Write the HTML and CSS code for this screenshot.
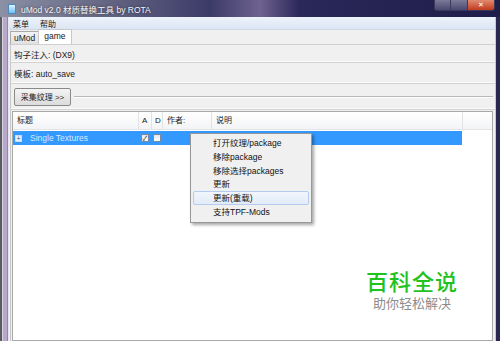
FILE: index.html
```html
<!DOCTYPE html>
<html lang="zh-CN">

<head>
    <meta charset="UTF-8">
    <title>uMod v2.0 材质替换工具 by ROTA</title>
    <link rel="stylesheet" href="styles.css">
</head>

<body>
    <div class="window">
        <div class="titlebar">
            <span class="app-icon"></span>
            <span class="title">uMod v2.0 材质替换工具 by ROTA</span>
            <div class="controls">
                <span class="ctl min"></span>
                <span class="ctl max"></span>
                <span class="ctl close">✕</span>
            </div>
        </div>
        <div class="frame">
            <div class="edge-left"></div>
            <div class="main">
                <div class="menubar">
                    <span class="menu-item">菜单</span>
                    <span class="menu-item">帮助</span>
                </div>
                <div class="tabs">
                    <span class="tab">uMod</span>
                    <span class="tab active">game</span>
                </div>
                <div class="panel">
                    <div class="row">钩子注入: (DX9)</div>
                    <div class="row">模板: auto_save</div>
                    <div class="row row-button">
                        <button class="btn">采集纹理 &gt;&gt;</button>
                        <span class="rule"></span>
                    </div>
                    <div class="list">
                        <div class="list-head">
                            <span class="col c-title">标题</span>
                            <span class="col c-a">A</span>
                            <span class="col c-d">D</span>
                            <span class="col c-author">作者:</span>
                            <span class="col c-desc">说明</span>
                            <span class="col c-rest"></span>
                        </div>
                        <div class="list-row selected">
                            <span class="col c-title"><span class="expander">+</span>Single Textures</span>
                            <span class="col c-a"><span class="check on">✓</span></span>
                            <span class="col c-d"><span class="check"></span></span>
                            <span class="col c-author"></span>
                            <span class="col c-desc"></span>
                        </div>

                        <!-- context menu opened on the row -->
                        <ul class="context-menu">
                            <li>打开纹理/package</li>
                            <li>移除package</li>
                            <li>移除选择packages</li>
                            <li>更新</li>
                            <li class="hover">更新(重载)</li>
                            <li>支持TPF-Mods</li>
                        </ul>
                    </div>
                </div>
            </div>
            <div class="edge-right"></div>
        </div>

        <div class="watermark">
            <div class="wm-big">百科全说</div>
            <div class="wm-small">助你轻松解决</div>
        </div>
    </div>
</body>

</html>
```

FILE: styles.css
```css
* {
    box-sizing: border-box;
}

body {
    margin: 0;
    font-family: "Liberation Sans", "Noto Sans CJK SC", sans-serif;
    font-size: 8px;
    color: #1a1a1a;
}

.window {
    position: relative;
    width: 500px;
    height: 341px;
    overflow: hidden;
    background: #24224c;
}

/* title bar */
.titlebar {
    display: flex;
    align-items: center;
    height: 17px;
    padding-left: 8px;
    background: linear-gradient(90deg, #8b90a4 0%, #6b6d88 18%, #3c3a68 42%, #6e6290 52%, #2a2858 60%, #1f1d4a 100%);
}

.app-icon {
    width: 8px;
    height: 10px;
    margin-right: 5px;
    background: linear-gradient(#dff2ff, #6fc0f0);
    border: 1px solid #4a8ac0;
}

.title {
    color: #f4f4f8;
    font-size: 8.5px;
    text-shadow: 0 0 3px rgba(0, 0, 0, 0.6);
}

.controls {
    display: flex;
    align-self: flex-start;
    margin-left: auto;
    margin-right: 5px;
}

.ctl {
    height: 11px;
    border: 1px solid #3b3a58;
    border-top: 0;
    background: linear-gradient(#7c7a98, #4a4870);
}

.min {
    width: 17px;
    border-radius: 0 0 0 3px;
}

.max {
    width: 17px;
    border-left: 0;
}

.close {
    width: 27px;
    border-left: 0;
    border-radius: 0 0 3px 0;
    background: linear-gradient(#e08a70, #c23a1e);
    color: #fff;
    font-size: 7px;
    line-height: 10px;
    text-align: center;
}

/* frame around the client area */
.frame {
    display: flex;
    height: 324px;
}

.edge-left {
    width: 9px;
    background: linear-gradient(90deg, #5a5a60 0, #5a5a60 2px, #d4d2dc 2px, #d4d2dc 3px, #b8a8cc 3px, #b8a8cc 7px, #8c8a9c 7px, #8c8a9c 8px, #e6e6ee 8px);
}

.edge-right {
    width: 5px;
    background: linear-gradient(90deg, #c8c8d0 0, #c8c8d0 1px, #2a2850 1px);
}

.main {
    display: flex;
    flex-direction: column;
    flex: 1;
    background: #f0f0f0;
}

.menubar {
    display: flex;
    gap: 11px;
    height: 13px;
    padding-left: 4px;
    align-items: center;
    background: linear-gradient(#eef3fb, #dce5f3);
    border-bottom: 1px solid #cfd7e5;
}

.tabs {
    display: flex;
    align-items: flex-end;
    height: 15px;
    padding-left: 1px;
    border-bottom: 1px solid #d0d0d0;
}

.tab {
    height: 13px;
    padding: 0 3px;
    line-height: 12px;
    font-size: 8.5px;
    background: linear-gradient(#f2f2f2, #e0e0e0);
    border: 1px solid #a8a8a8;
    border-bottom: 0;
}

.tab.active {
    height: 15px;
    padding: 0 5px;
    line-height: 13px;
    background: #fff;
    border-color: #c8c8c8;
    margin-left: -1px;
}

.panel {
    display: flex;
    flex-direction: column;
    flex: 1;
    margin-left: 1px;
    border-left: 1px solid #c8c8c8;
}

.row {
    display: flex;
    align-items: center;
    height: 18px;
    padding-left: 3px;
    border-bottom: 1px solid #d2d2d2;
    box-shadow: inset 0 -1px 0 #fbfbfb;
    font-size: 8.5px;
}

.row + .row {
    height: 21px;
}

.row-button {
    height: 26px !important;
    gap: 3px;
}

.btn {
    width: 57px;
    height: 18px;
    padding: 0;
    font-family: inherit;
    font-size: 8px;
    color: #222;
    background: linear-gradient(#f4f4f4, #dcdcdc);
    border: 1px solid #8a8a8a;
    border-radius: 2px;
}

.rule {
    flex: 1;
    margin-right: 2px;
    height: 2px;
    border-top: 1px solid #b8b8b8;
    border-bottom: 1px solid #fff;
}

/* texture list */
.list {
    position: relative;
    flex: 1;
    margin: 1px 2px 0 1px;
    background: #fff;
    border: 1px solid #a8a8a8;
}

.list-head,
.list-row {
    display: flex;
}

.list-head {
    height: 18px;
    align-items: center;
    background: linear-gradient(#fff, #f3f4f6);
    border-bottom: 1px solid #e4e4e4;
}

.list-head .col {
    height: 100%;
    line-height: 18px;
    padding-left: 4px;
    border-right: 1px solid #e2e2e2;
}

.list-head .c-rest {
    flex: 1;
    border-right: 0;
}

.c-title { width: 126px; }
.c-a { width: 13px; }
.c-d { width: 11px; }
.c-author { width: 49px; }
.c-desc { width: 251px; }

.list-head .c-a,
.list-head .c-d {
    padding-left: 3px;
}

.list-row {
    height: 14px;
    margin-top: 1px;
    align-items: center;
}

.list-row.selected {
    width: 449px;
    background: #3399ff;
    color: #d4eaff;
}

.list-row .col {
    display: flex;
    align-items: center;
}

.list-row .c-title {
    padding-left: 2px;
    font-size: 8.5px;
}

.expander {
    width: 7px;
    height: 7px;
    margin-right: 8px;
    border: 1px solid #c8dcf0;
    background: #eaf3fc;
    color: #2a5a8a;
    font-size: 7px;
    line-height: 5px;
    text-align: center;
}

.check {
    width: 8px;
    height: 8px;
    border: 1px solid #7a8aa0;
    background: linear-gradient(#e4e8ee, #fff);
    color: #222;
    font-size: 7px;
    line-height: 7px;
    text-align: center;
}

.c-a .check { margin-left: 2px; }
.c-d .check { margin-left: 1px; }

/* popup menu */
.context-menu {
    position: absolute;
    left: 177px;
    top: 21px;
    width: 122px;
    margin: 0;
    padding: 2px 0 3px;
    list-style: none;
    background: #f0f0f0;
    border: 1px solid #979797;
    box-shadow: 2px 2px 3px rgba(0, 0, 0, 0.35);
}

.context-menu li {
    height: 13.8px;
    margin: 0 2px;
    padding-left: 19px;
    line-height: 13px;
    border: 1px solid transparent;
    font-size: 8.5px;
    color: #111;
}

.context-menu li.hover {
    background: linear-gradient(#f2f6fc, #e2ebf8);
    border-color: #b4cdee;
    border-radius: 2px;
}

/* overlay watermark */
.watermark {
    position: absolute;
    left: 366px;
    top: 267px;
    text-align: center;
    font-family: "Noto Sans CJK SC", sans-serif;
}

.wm-big {
    font-size: 22px;
    line-height: 27px;
    font-weight: 500;
    letter-spacing: 1px;
    color: #1ec31e;
}

.wm-small {
    margin-top: 1px;
    font-size: 13px;
    line-height: 15px;
    color: #8c8c8c;
}
```
